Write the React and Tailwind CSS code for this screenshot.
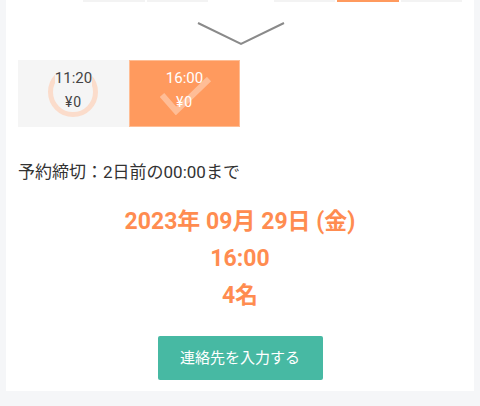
export default function App() {
  const cells = ["", "gray", "gray", "", "gray", "orange", "gray"];
  return (
    <div className="min-h-screen bg-[#f5f6f8] px-[6px] pb-[15px]" style={{ fontFamily: "Roboto, 'Noto Sans CJK JP', sans-serif" }}>
      <div className="bg-white pb-[11px]">
        {/* calendar row (scrolled) */}
        <div className="ml-[14px] mr-[12px] grid grid-cols-7 gap-[2px]">
          {cells.map((c, i) => (
            <div
              key={i}
              className={
                c === "orange" ? "h-[2px] bg-[#ff9a5e]" : c === "gray" ? "h-[2px] bg-[#f3f3f3]" : "h-[2px]"
              }
            />
          ))}
        </div>

        {/* chevron */}
        <div className="mt-[18px] flex justify-center">
          <svg width="90" height="26" viewBox="0 0 90 26" className="ml-[2px]">
            <polyline points="2,3 45,24 88,3" fill="none" stroke="#8a8a8a" strokeWidth="2" />
          </svg>
        </div>

        {/* time slots */}
        <div className="mt-[14px] flex px-[12px]">
          <div className="relative flex h-[67px] w-[111px] flex-col items-center bg-[#f5f5f5] text-[#444]">
            <div className="absolute left-[30px] top-[7px] h-[50px] w-[50px] rounded-full border-[5px] border-[#fbdccb]" />
            <span className="relative mt-[6px] bg-[#f5f5f5] text-[15px] leading-6">11:20</span>
            <span className="relative mt-[2px] text-[14px] leading-5 tracking-[1px]">¥0</span>
          </div>
          <div className="relative flex h-[67px] w-[111px] flex-col items-center border border-[#ffbd94] bg-[#ff9a5e] text-white">
            <svg className="absolute left-[30px] top-[16px]" width="52" height="38" viewBox="0 0 52 38">
              <polyline points="2,18 16,34 49,2" fill="none" stroke="rgba(255,255,255,0.35)" strokeWidth="6" />
            </svg>
            <span className="relative mt-[7px] text-[15px] leading-5">16:00</span>
            <span className="relative mt-[4px] text-[14px] leading-5 tracking-[1px]">¥0</span>
          </div>
        </div>

        {/* deadline */}
        <p className="mt-[33px] px-[12px] text-[17px] leading-6 text-[#333]">予約締切：2日前の00:00まで</p>

        {/* selection summary */}
        <div className="mt-[19px] flex flex-col items-center text-[23px] font-bold leading-[37px] text-[#ff8c50]">
          <span>2023年 09月 29日 (金)</span>
          <span>16:00</span>
          <span>4名</span>
        </div>

        <div className="mt-[22px] flex justify-center">
          <button className="h-[44px] w-[165px] rounded-[2px] bg-[#47b9a3] text-[15px] text-white">
            連絡先を入力する
          </button>
        </div>
      </div>
    </div>
  );
}
